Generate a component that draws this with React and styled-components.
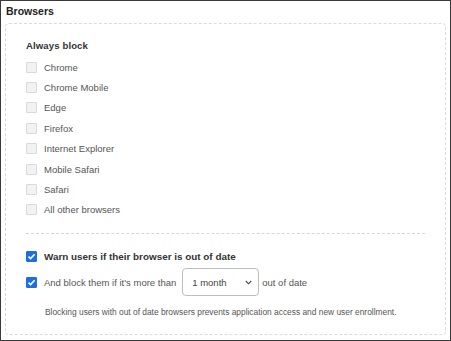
import React from "react";
import styled, { createGlobalStyle } from "styled-components";

const Global = createGlobalStyle`
  html, body { margin: 0; padding: 0; background: #fff; }
  body { font-family: "Liberation Sans", Arial, sans-serif; }
`;

const Frame = styled.div`
  box-sizing: border-box;
  width: 451px;
  height: 341px;
  border: 1px solid #3a3a3a;
  padding: 3px 4px 5px 4px;
  display: flex;
  flex-direction: column;
  background: #fff;
`;

const Title = styled.h2`
  margin: 0 0 0 1px;
  font-size: 10.5px;
  font-weight: bold;
  color: #222;
  line-height: 15px;
  height: 19px;
`;

const Panel = styled.section`
  box-sizing: border-box;
  flex: 1;
  border: 1px dashed #d6dde2;
  border-radius: 4px;
  padding: 15px 20px 0 20px;
  display: flex;
  flex-direction: column;
`;

const Heading = styled.div`
  font-size: 9.6px;
  font-weight: bold;
  color: #333;
  line-height: 14px;
  letter-spacing: 0.1px;
  margin-bottom: 4px;
`;

const List = styled.div`
  display: flex;
  flex-direction: column;
`;

const Row = styled.label`
  display: flex;
  align-items: center;
  height: ${(p) => p.$h || "20.4px"};
  font-size: ${(p) => (p.$strong ? "9.9px" : "9.5px")};
  color: ${(p) => (p.$strong ? "#333" : "#555")};
  font-weight: ${(p) => (p.$strong ? "bold" : "normal")};
`;

const Box = styled.span`
  box-sizing: border-box;
  width: 11px;
  height: 11px;
  flex: none;
  margin-right: 7px;
  border-radius: 1px;
  display: flex;
  align-items: center;
  justify-content: center;
  background: ${(p) => (p.$checked ? "#1b6fe0" : "#f2f2f2")};
  border: 1px solid ${(p) => (p.$checked ? "#1b6fe0" : "#dadada")};
`;

const Separator = styled.hr`
  margin: 13px 0 0 0;
  border: 0;
  border-top: 1px dashed #d3d8dc;
  height: 0;
`;

const Options = styled.div`
  display: flex;
  flex-direction: column;
  margin-top: 11px;
`;

const Select = styled.div`
  box-sizing: border-box;
  width: 77px;
  height: 28px;
  margin: 0 3px 0 6px;
  border: 1px solid #bdbdbd;
  border-radius: 4px;
  padding: 0 6px 0 9px;
  display: flex;
  align-items: center;
  justify-content: space-between;
  color: #444;
  font-weight: normal;
  font-size: 9.5px;
`;

const Note = styled.p`
  margin: 9px 0 0 19px;
  font-size: 8.4px;
  color: #555;
  line-height: 12px;
`;

function Check({ checked }) {
  return (
    <Box $checked={checked}>
      {checked && (
        <svg width="9" height="9" viewBox="0 0 9 9">
          <path d="M1.5 4.6 L3.6 6.6 L7.6 2.2" fill="none" stroke="#fff" strokeWidth="1.6" />
        </svg>
      )}
    </Box>
  );
}

const browsers = [
  "Chrome",
  "Chrome Mobile",
  "Edge",
  "Firefox",
  "Internet Explorer",
  "Mobile Safari",
  "Safari",
  "All other browsers",
];

export default function App() {
  return (
    <>
      <Global />
      <Frame>
        <Title>Browsers</Title>
        <Panel>
          <Heading>Always block</Heading>
          <List>
            {browsers.map((b) => (
              <Row key={b}>
                <Check />
                {b}
              </Row>
            ))}
          </List>
          <Separator />
          <Options>
            <Row $strong $h="22px">
              <Check checked />
              Warn users if their browser is out of date
            </Row>
            <Row $h="30px">
              <Check checked />
              And block them if it's more than
              <Select>
                <span>1 month</span>
                <svg width="7" height="5" viewBox="0 0 7 5">
                  <path d="M0.8 1 L3.5 3.8 L6.2 1" fill="none" stroke="#444" strokeWidth="1.1" />
                </svg>
              </Select>
              out of date
            </Row>
            <Note>
              Blocking users with out of date browsers prevents application access and new user enrollment.
            </Note>
          </Options>
        </Panel>
      </Frame>
    </>
  );
}
